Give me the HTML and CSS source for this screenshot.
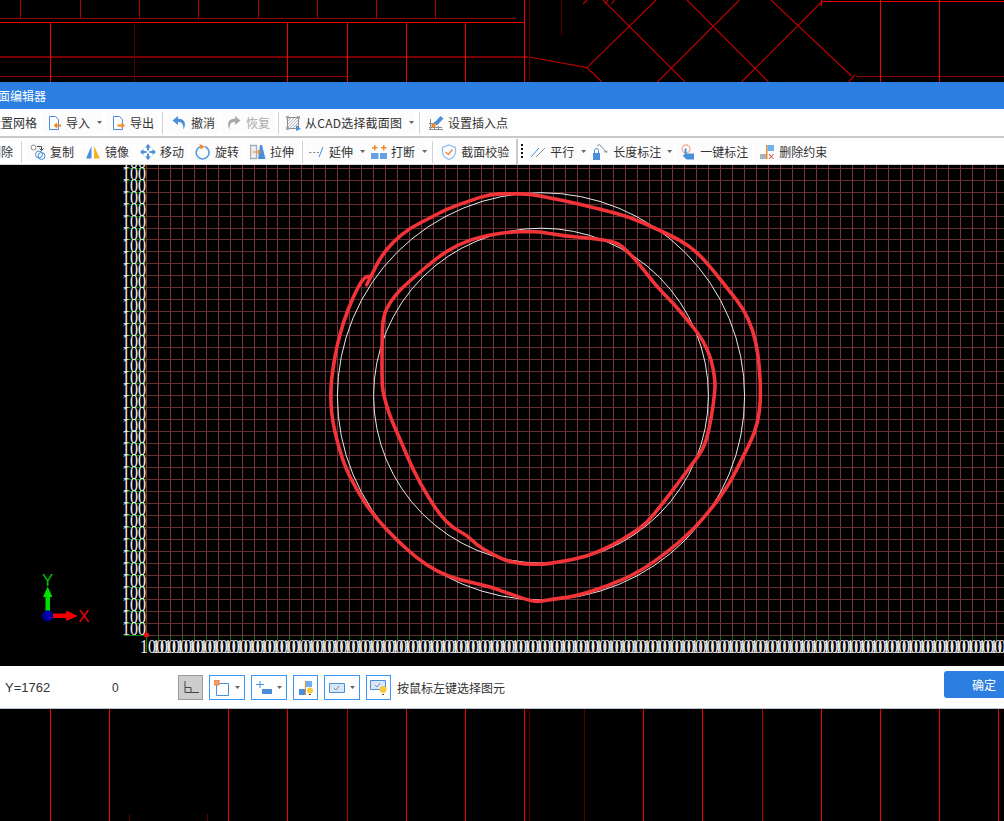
FILE: index.html
```html
<!DOCTYPE html>
<html lang="zh-CN">
<head>
<meta charset="utf-8">
<title>截面编辑器</title>
<link rel="stylesheet" href="styles.css">
</head>
<body>
<div class="page">
  <svg class="backdrop top" viewBox="0 0 1004 82" aria-hidden="true">
    <g class="ln-mid">
      <path d="M20.5 0V18M80 0V18M139.5 0V18M198.5 0V18M258 0V18M317.5 0V18M376.5 0V18M435.5 0V18"/>
    </g>
    <g class="ln-dark"><path d="M0 18.5H516M0 76.5H347M856 76.5H1004"/></g>
    <g class="ln-heavy"><path d="M0 57H528"/></g>
    <g class="ln-bright">
      <path d="M0 22.5H524M50.5 22V82M287.5 22V82M347.5 22V82M406.5 22V82M465.5 22V82M524.5 0V82M880.5 0V82M939.5 0V82M821 1.5H1004M821.5 0V6"/>
    </g>
    <g class="ln-faint"><path d="M134.5 18V82M529.5 0V82M561.5 0V35"/></g>
    <g class="ln-diag">
      <path d="M529 57L587 67.7L656 0M587 67.7L602 82M603 0L685 82M657.5 82L739.5 0M687 0L768.5 82M741.5 82L821.5 2M771 0L851.5 76M855 75L848.5 82M583 4L587 0M605 4L608 0M611.5 4L614.5 0"/>
    </g>
  </svg>

  <div class="window">
    <div class="titlebar"><span class="title">截面编辑器</span></div>

    <div class="toolbar first">
      <span class="tool plain snug-end">设置网格</span>
      <button class="tool caret-tool"><svg class="ico" viewBox="0 0 16 16"><path class="o-blue" d="M3.5 1.5H9.5L12.5 4.5V14.5H3.5Z"/><path class="f-orange" d="M15 9.5H11V7.5L7.5 10.5L11 13.5V11.5H15Z"/></svg>导入<i class="caret"></i></button>
      <button class="tool"><svg class="ico" viewBox="0 0 16 16"><path class="o-blue" d="M3.5 1.5H9.5L12.5 4.5V14.5H3.5Z"/><path class="f-orange" d="M7.5 9.5H11.5V7.5L15 10.5L11.5 13.5V11.5H7.5Z"/></svg>导出</button>
      <span class="sep"></span>
      <button class="tool"><svg class="ico" viewBox="0 0 16 16"><path class="f-blue" d="M7 1L1.5 5.5L7 10V7C10.5 7 12.5 8.5 12.5 14.5C15 10.5 15 3.8 7 3.8Z"/></svg>撤消</button>
      <button class="tool off"><svg class="ico" viewBox="0 0 16 16"><path class="f-gray" d="M9 1L14.5 5.5L9 10V7C5.5 7 3.5 8.5 3.5 14.5C1 10.5 1 3.8 9 3.8Z"/></svg>恢复</button>
      <span class="sep tight"></span>
      <button class="tool caret-tool"><svg class="ico" viewBox="0 0 16 16"><path class="hatch" d="M3 6L6 3M3 9L9 3M3 12L12 3M4 14L13 5M7 14L13 8M10 14L13 11"/><path class="o-gray" d="M2.5 2.5H13.5V13.5H2.5Z"/><path class="f-gray" d="M1 1H4V4H1ZM12 1H15V4H12ZM1 12H4V15H1Z"/><path class="f-blue" d="M11 10L16 14L11 16Z"/></svg><span class="cad-label">从CAD选择截面图</span><i class="caret"></i></button>
      <span class="sep"></span>
      <button class="tool"><svg class="ico" viewBox="0 0 16 16"><path class="o-gray" d="M2.5 4V15M6.5 7V15M10.5 11V15M1 8.5H6M1 12.5H14M1 14.5H15"/><path class="f-blue" d="M6 8L12.5 1L15.5 3.5L9 10.5Z"/><path class="f-orange" d="M3.5 8.5H7.5V12.5H3.5Z"/></svg>设置插入点</button>
    </div>

    <div class="toolbar second">
      <span class="tool plain">删除</span>
      <span class="sep"></span>
      <button class="tool"><svg class="ico" viewBox="0 0 16 16"><circle class="o-gray" cx="3.5" cy="3.5" r="2.5"/><path class="o-dark" d="M7 2.5H11.5V6M9.5 4.5L11.5 6.5L13.5 4.5"/><circle class="o-blue" cx="9" cy="10.5" r="3.5"/><circle class="o-blue" cx="11.5" cy="12" r="3.5"/></svg>复制</button>
      <button class="tool"><svg class="ico" viewBox="0 0 16 16"><path class="f-blue" d="M6.5 2V14.5H1Z"/><path class="f-amber" d="M9 2V14.5H15Z"/></svg>镜像</button>
      <button class="tool"><svg class="ico" viewBox="0 0 16 16"><path class="f-blue" d="M8 0L11 3.5H9V6.5H7V3.5H5ZM8 16L5 12.5H7V9.5H9V12.5H11ZM0 8L3.5 5V7H6.5V9H3.5V11ZM16 8L12.5 11V9H9.5V7H12.5V5Z"/></svg>移动</button>
      <button class="tool"><svg class="ico" viewBox="0 0 16 16"><path class="o-blue2" d="M5 2.7A6.4 6.4 0 1 0 10 2.6"/><path class="f-orange" d="M4.5 0L10 2.6L5.5 5.5Z"/></svg>旋转</button>
      <button class="tool"><svg class="ico" viewBox="0 0 16 16"><path class="o-gray2" d="M.5 1.5H6.5V14.5H.5Z"/><path class="f-blue" d="M10 1H12L15.5 15H8Z"/><path class="f-orange" d="M2.5 7.5H8V5.5L11 8L8 10.5V8.5H2.5Z"/></svg>拉伸</button>
      <span class="sep tight"></span>
      <button class="tool caret-tool snug"><svg class="ico" viewBox="0 0 16 16"><path class="o-gray" d="M0 8.5H2.5M4 8.5H6.5M8 8.5H10"/><path class="o-blue" d="M10 13L14 3"/></svg>延伸<i class="caret"></i></button>
      <button class="tool caret-tool"><svg class="ico" viewBox="0 0 16 16"><path class="f-blue2" d="M0 9H7.5V15H0ZM9 9H16.5V15H9Z"/><path class="f-orange" d="M3 1H4.5V3H6.5V4.500H4.500V6.500H3V4.500H1V3H3ZM12 1H13.500V3H15.500V4.500H13.500V6.500H12V4.500H10V3H12Z"/></svg>打断<i class="caret"></i></button>
      <span class="sep"></span>
      <button class="tool"><svg class="ico" viewBox="0 0 16 16"><path class="o-blue3" d="M8 1L14.500 3.500V8C14.500 11.500 11.500 14 8 15.500C4.500 14 1.500 11.500 1.500 8V3.500Z"/><path class="o-orange" d="M4.500 8L7.500 10.500L11.500 5.500"/></svg>截面校验</button>
      <span class="split"></span>
      <span class="grip"></span>
      <button class="tool caret-tool snug"><svg class="ico" viewBox="0 0 16 16"><path class="o-blue" d="M1 13L9 4"/><path class="o-gray" d="M6 13L15 4"/></svg>平行<i class="caret"></i></button>
      <button class="tool caret-tool short"><svg class="ico" viewBox="0 0 16 16"><path class="f-blue" d="M1 9H8V16H1Z"/><path class="o-blue" d="M2.500 9V6.500A2 2 0 0 1 6.500 6.500V9"/><path class="o-gray" d="M8 1L15 9M5 2L8 0M12 8L15.500 7"/></svg><span class="label-gap">长度标注</span><i class="caret"></i></button>
      <button class="tool"><svg class="ico" viewBox="0 0 16 16"><circle class="o-salmon" cx="6" cy="5" r="4"/><path class="f-blue" d="M4.500 4.500H6.500V9.500H14V15.500H6.500L2.500 11.500L4.500 10.500Z"/></svg>一键标注</button>
      <button class="tool"><svg class="ico" viewBox="0 0 16 16"><path class="f-gray2" d="M1 10H7V15H1Z"/><path class="f-orange" d="M7 1H8.500V15H7Z"/><path class="f-blue3" d="M8.500 1H15V7H8.500Z"/><path class="o-red" d="M10 10L14.500 15M14.500 10L10 15"/></svg>删除约束</button>
    </div>

    <div class="drawing">
      <svg id="plot" viewBox="0 165 1004 501" aria-label="截面图">
        <g id="grid"></g>
        <g id="labels"></g>
        <circle class="guide" cx="541" cy="396.300" r="203.600"/>
        <circle class="guide" cx="541" cy="395.600" r="167.400"/>
        <g id="sketches"></g>
        <circle class="origin" cx="146.500" cy="635" r="2.500"/>
        <path class="axis-y" d="M45.500 612V597H43L47.700 586.500L52.500 597H50V612Z"/>
        <path class="axis-x" d="M52 613.500H66V610.500L78 616L66 621V618H52Z"/>
        <circle class="axis-o" cx="47.700" cy="615.700" r="5.500"/>
        <text class="axis-y-t" x="47.700" y="586" text-anchor="middle">Y</text>
        <text class="axis-x-t" x="84" y="622" text-anchor="middle">X</text>
      </svg>
    </div>

    <div class="statusbar">
      <span class="coord">Y=1762</span>
      <span class="count">0</span>
      <button class="sb pressed"><svg class="sb-ico" viewBox="0 0 16 16"><path d="M2 1V12.500H16M2 7.500H8V12.500"/></svg></button>
      <button class="sb split-sb"><svg class="sb-ico" viewBox="0 0 16 16"><path class="o-blue" d="M2.500 3.500H14.500V15.500H2.500Z"/><path class="f-orange2" d="M0 0H5V5H0Z"/></svg><i class="caret"></i></button>
      <button class="sb split-sb"><svg class="sb-ico" viewBox="0 0 16 16"><path class="o-blue" d="M4 1V8M0 4.500H8"/><path class="f-blue" d="M6 9H16V14H6Z"/></svg><i class="caret"></i></button>
      <button class="sb"><svg class="sb-ico" viewBox="0 0 16 16"><path class="f-blue" d="M1 9H7V15H1Z"/><path class="f-blue3" d="M8 1H14V7H8Z"/><path class="f-orange" d="M7 1H8V15H7Z"/><circle class="f-yellow" cx="12" cy="10.500" r="3"/><path class="o-dark" d="M11 14.500H13"/></svg></button>
      <button class="sb split-sb"><svg class="sb-ico" viewBox="0 0 16 16"><path class="o-blue" d="M.5 3.500H15.500V12.500H.5Z"/><path class="f-pale" d="M1 4H15V12H1Z"/><path class="o-gray" d="M5 8L7 10L10 6"/></svg><i class="caret"></i></button>
      <button class="sb"><svg class="sb-ico big" viewBox="0 0 18 18"><path class="o-blue" d="M.5 1.500H15.500V10.500H.5Z"/><path class="f-pale" d="M1 2H15V10H1Z"/><path class="o-gray" d="M5 6L7 8L10 4"/><circle class="f-yellow" cx="13" cy="10.500" r="3.500"/><path class="o-dark" d="M12 15.500H14"/></svg></button>
      <span class="hint">按鼠标左键选择图元</span>
      <button class="ok">确定</button>
    </div>
  </div>

  <svg class="backdrop bottom" viewBox="0 709 1004 112" aria-hidden="true">
    <g class="ln-bright"><path d="M50.500 709V821M109.500 709V821M228.500 709V821M287.500 709V821M406.500 709V821M465.500 709V821M524.500 709V821M643.500 709V821M702.500 709V821M821.500 709V821M880.500 709V821M939.500 709V821M998.500 709V821"/></g>
    <g class="ln-mid"><path d="M347.500 709V821M762.500 709V821"/></g>
    <g class="ln-faint"><path d="M529.500 709V821M584.500 709V821M129.500 814V821M207.500 814V821"/></g>
  </svg>
</div>
<script src="plot.js"></script>
</body>
</html>
```

FILE: styles.css
```css
* { box-sizing: border-box; }
html, body { margin: 0; padding: 0; background: #000; }
body { width: 1004px; height: 821px; overflow: hidden; }
.page { display: flex; flex-direction: column; width: 1004px; height: 821px; overflow: hidden; font-family: "Noto Sans CJK SC", "Liberation Sans", sans-serif; font-size: 12px; color: #333; }

.backdrop { display: block; width: 1004px; flex: none; fill: none; shape-rendering: crispEdges; }
.backdrop.top { height: 82px; }
.backdrop.bottom { height: 112px; }
.backdrop path { stroke-width: 1; fill: none; }
.ln-bright path { stroke: #f00000; }
.ln-mid path { stroke: #b00000; }
.ln-dark path { stroke: #900000; }
.ln-heavy path { stroke: #780000; stroke-width: 2; }
.ln-faint path { stroke: #560000; }
.ln-diag path { stroke: #b80000; stroke-width: 1.200; shape-rendering: geometricPrecision; }

.window { display: flex; flex-direction: column; flex: none; background: #fff; }
.titlebar { height: 27px; background: #2c7fe0; color: #fff; display: flex; align-items: center; overflow: hidden; }
.title { margin-left: -14px; line-height: 27px; }

.toolbar { display: flex; align-items: center; background: #fff; white-space: nowrap; }
.toolbar.first { height: 29px; margin-left: -15px; width: 1019px; border-bottom: 2px solid #c8c9cc; }
.toolbar.second { height: 27px; margin-left: -15px; width: 1019px; padding-top: 1px; border-bottom: 1px solid #d4d6da; }

.tool { display: flex; align-items: center; height: 22px; padding: 0 4px; margin: 0 3px 0 0; gap: 4px; border: 0; background: #fcfcfc; border-radius: 3px; font: inherit; color: #333; line-height: 22px; }
.tool.plain { background: none; }
.tool.snug-end { margin-right: 1px; }
.tool.off { color: #aaa; }
.tool.caret-tool { padding-right: 1px; }
.tool.snug { margin-right: 1px; }
.tool.short .caret { margin-left: 2px; }
.label-gap { margin-left: 1px; }
.cad-label { width: 97px; letter-spacing: .22px; }

.ico { width: 16px; height: 16px; flex: none; }
.caret { display: inline-block; width: 5px; height: 3px; margin-left: 3px; background: #666; clip-path: polygon(0 0, 100% 0, 50% 100%); flex: none; }

.sep { width: 1px; height: 22px; margin: 0 4px 0 1px; background: #d0d2d5; flex: none; }
.sep.tight { margin-right: 2px; }
.split { width: 2px; height: 26px; margin: 0 3px 0 0; background: #c8c9cc; flex: none; }
.grip { width: 2px; height: 16px; margin: 0 3px 0 0; flex: none; background-image: linear-gradient(#111 50%, transparent 50%); background-size: 2px 4px; }

.f-blue { fill: #4a8fdc; } .f-blue2 { fill: #64a2e6; } .f-blue3 { fill: #6fb0f2; } .f-orange { fill: #ef8a2c; } .f-orange2 { fill: #f5a26a; stroke: #e5813a; } .f-amber { fill: #f6b31f; } .f-gray { fill: #a8a9ad; } .f-gray2 { fill: #aeb0b8; } .f-pale { fill: #d8e8fa; } .f-yellow { fill: #f9c93c; }
.o-blue, .o-blue2, .o-blue3, .o-gray, .o-orange, .o-dark, .o-red, .o-salmon, .hatch { fill: none; }
.o-blue { stroke: #4a8fdc; stroke-width: 1; } .o-blue2 { stroke: #5a9be0; stroke-width: 1.600; } .o-blue3 { stroke: #8dbbee; stroke-width: 1.200; } .o-gray { stroke: #8a8c90; stroke-width: 1; } .o-gray2 { stroke: #a9abb0; stroke-width: 1.400; fill: #f1f1f1; } .o-orange { stroke: #ef8a4c; stroke-width: 1.400; } .o-dark { stroke: #444; stroke-width: 1; } .o-red { stroke: #d83a2c; stroke-width: 1; } .o-salmon { stroke: #f2ae96; stroke-width: 1.400; } .hatch { stroke: #9a9ca0; stroke-width: .8; }

.drawing { height: 501px; background: #000; }
#plot { display: block; width: 1004px; height: 501px; }
.grid-v, .grid-h { fill: none; shape-rendering: crispEdges; stroke-width: 1; }
.grid-v { stroke: #78363a; }
.grid-h { stroke: #662e32; }
.tick { fill: none; stroke: #087a08; shape-rendering: crispEdges; }
.axis-label { fill: #f0f0f0; font-family: "Liberation Serif", serif; font-size: 19px; }
.guide { fill: none; stroke: #e8e8e8; stroke-width: 1; }
.sketch { fill: none; stroke: #f23338; stroke-width: 3.600; stroke-linejoin: round; stroke-linecap: round; }
.origin { fill: #f01010; }
.axis-y { fill: #00e000; }
.axis-x { fill: #f00000; }
.axis-o { fill: #0000a8; }
.axis-y-t, .axis-x-t { font-family: "Liberation Sans", sans-serif; font-size: 17px; }
.axis-y-t { fill: #00c000; }
.axis-x-t { fill: #f00000; }

.statusbar { display: flex; align-items: center; height: 43px; background: #fff; border-bottom: 1px solid #b9c4d6; padding: 1px 0 0 5px; position: relative; overflow: hidden; }
.coord { width: 107px; font-family: "Liberation Sans", sans-serif; font-size: 13px; color: #333; flex: none; }
.count { width: 66px; font-family: "Liberation Sans", sans-serif; font-size: 12px; color: #333; flex: none; }
.sb { display: flex; align-items: center; justify-content: flex-start; width: 25px; height: 25px; margin: 0 6px 0 0; padding: 0 0 0 4px; background: #fff; border: 1px solid #3a97f5; flex: none; }
.sb.pressed { background: #cdcdcd; border: 1px solid #9a9a9a; }
.sb.pressed path { fill: none; stroke: #444; stroke-width: 1; }
.sb.split-sb { width: 36px; }
.sb-ico { width: 16px; height: 16px; flex: none; }
.sb-ico.big { width: 18px; height: 18px; margin-left: -1px; }
.sb .caret { margin-left: 5px; }
.hint { flex: none; color: #333; }
.ok { position: absolute; left: 944px; top: 5px; width: 80px; height: 27px; border: 0; border-radius: 3px; background: #2c7fe0; color: #fff; font: inherit; padding: 0; text-align: center; }
```

FILE: plot.js
```js
(function () {
  var NS = "http://www.w3.org/2000/svg";
  var STEP = 11.97, X0 = 146.3, Y0 = 635;
  var grid = document.getElementById("grid");
  var labels = document.getElementById("labels");
  var sketches = document.getElementById("sketches");

  var OUTER = "490,194 510,193.7 530,194 550,198 573,202.7 603,210 630,217 656.7,229 680,240 696.7,251.7 713,270 730,291.7 743,308 753,330 758,353 760,376.7 760.5,390 760,410 755,433 743,456.7 730,483 713,506.7 693,530 670,550 640,571.7 606.7,586.7 573,596.7 553,599 540,601.7 530,600.7 513,595 490,586.7 460,580 436.7,571.7 416.7,558 396.7,540 373,515 356.7,490 343,463 331.7,420 330.5,390 332.7,370 336.7,346.7 343,323 353,297 363,278 371.7,275 365,288 371.7,275 380,258 393,241.7 410,228 430,218 446.7,209 470,200.7 490,194";
  var INNER = "480,236.7 510,231.7 530,231.7 540,231.7 563,236 590,238 616.7,242 628,251.7 640,265 656.7,286.7 673,303 690,323 703,340 711.7,360 715,380 715,390 711.7,416.7 705,446.7 693,463 676.7,485 660,506.7 646.7,523 633,533 613,545 586.7,556.7 560,561.7 540,565 510,562.7 490,553 476.7,545 466.7,535 453,528 440,515 428,496.7 413,470 401.7,443 390,416.7 385,400 382.7,390 382,380 382,340 383,316.7 390,301.7 401.7,288 416.7,275 436.7,258 456.7,245 480,236.7";

  function line(cls, d, parent) {
    var p = document.createElementNS(NS, "path");
    p.setAttribute("class", cls);
    p.setAttribute("d", d);
    parent.appendChild(p);
  }
  function label(x, y) {
    var t = document.createElementNS(NS, "text");
    t.setAttribute("class", "axis-label");
    t.setAttribute("x", x);
    t.setAttribute("y", y);
    t.setAttribute("textLength", 24);
    t.setAttribute("lengthAdjust", "spacingAndGlyphs");
    t.textContent = "100";
    labels.appendChild(t);
  }
  function smooth(src) {
    var p = src.split(" ").map(function (s) { return s.split(",").map(Number); });
    var n = p.length - 1, d = "", i, a, b;
    for (i = 0; i < n; i++) {
      a = p[i];
      b = p[i + 1];
      var mx = (a[0] + b[0]) / 2, my = (a[1] + b[1]) / 2;
      d += i === 0 ? "M" + mx + " " + my : "Q" + a[0] + " " + a[1] + " " + mx + " " + my;
    }
    a = p[n];
    b = p[1];
    d += "Q" + a[0] + " " + a[1] + " " + (a[0] + b[0]) / 2 + " " + (a[1] + b[1]) / 2;
    return d;
  }

  var v = "", h = "", ticks = "", k, x, y;
  for (k = 0; k < 72; k++) {
    x = Math.floor(X0 + k * STEP) + 0.5;
    v += "M" + x + " 165V635";
    ticks += "M" + x + " 635V640";
    label(140 + k * STEP, 652.5);
  }
  for (k = 0; k < 40; k++) {
    y = Math.floor(Y0 - k * STEP) + 0.5;
    h += "M146 " + y + "H1004";
    ticks += "M124 " + y + "H146";
    label(122, Y0 - k * STEP);
  }
  line("grid-v", v, grid);
  line("grid-h", h, grid);
  line("tick", ticks + "M146.5 635V652", grid);
  line("sketch", smooth(OUTER), sketches);
  line("sketch", smooth(INNER), sketches);
})();
```
